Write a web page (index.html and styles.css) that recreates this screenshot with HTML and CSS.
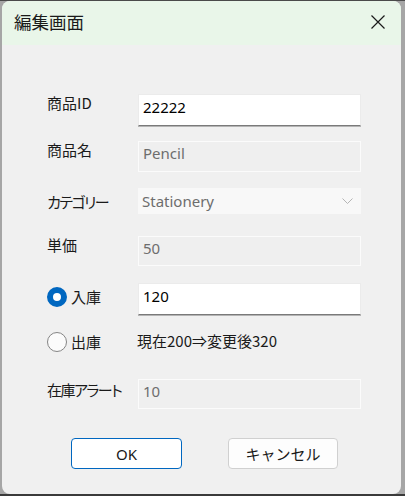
FILE: index.html
```html
<!DOCTYPE html>
<html lang="ja">
<head>
<meta charset="utf-8">
<title>編集画面</title>
<link rel="stylesheet" href="styles.css">
</head>
<body>
<div class="screen">
  <div class="topline"></div>
  <div class="window">
    <div class="titlebar">
      <span class="title">編集画面</span>
      <span class="close">
        <svg width="14" height="14" viewBox="0 0 14 14"><path d="M0.5 0.5 L13.5 13.5 M13.5 0.5 L0.5 13.5" stroke="#1a1a1a" stroke-width="1.2" fill="none"/></svg>
      </span>
    </div>
    <div class="content">
      <div class="row r1">
        <div class="label">商品ID</div>
        <div class="field edit h32">22222</div>
      </div>
      <div class="row r2">
        <div class="label">商品名</div>
        <div class="field disabled h31">Pencil</div>
      </div>
      <div class="row r3">
        <div class="label kana pad5">カテゴリー</div>
        <div class="field combo">
          <span>Stationery</span>
          <svg class="chev" width="11" height="6" viewBox="0 0 11 6"><path d="M0.5 0.5 L5.5 5.5 L10.5 0.5" stroke="#b5b5b5" stroke-width="1" fill="none"/></svg>
        </div>
      </div>
      <div class="row r4">
        <div class="label">単価</div>
        <div class="field disabled h30">50</div>
      </div>
      <div class="row r5">
        <div class="label radio-label pad4"><span class="radio on"></span>入庫</div>
        <div class="field edit h32">120</div>
      </div>
      <div class="row r6">
        <div class="label radio-label"><span class="radio"></span>出庫</div>
        <div class="info">現在200⇒変更後320</div>
      </div>
      <div class="row r7">
        <div class="label kana pad2">在庫アラート</div>
        <div class="field disabled h30">10</div>
      </div>
      <div class="buttons">
        <div class="btn primary">OK</div>
        <div class="btn">キャンセル</div>
      </div>
    </div>
  </div>
  <div class="taskbar"></div>
</div>
</body>
</html>
```
FILE: styles.css
```css
html, body {
  margin: 0;
  padding: 0;
}
body {
  background: #a6a6a6;
  width: 405px;
  height: 496px;
  overflow: hidden;
}
.screen {
  display: flex;
  flex-direction: column;
  height: 496px;
}
.topline {
  height: 1px;
  background: #4a4a4a;
}
.window {
  margin-left: 2px;
  width: 399px;
  height: 493px;
  background: #f0f0f0;
  border-radius: 8px;
  overflow: hidden;
  display: flex;
  flex-direction: column;
}
.taskbar {
  height: 2px;
  background: #3a3a3a;
}
.titlebar {
  height: 44px;
  flex: none;
  background: #e9f6e9;
  display: flex;
  align-items: center;
  justify-content: space-between;
  padding: 0 16px 2px 12px;
  box-sizing: border-box;
}
.title {
  font-family: "Noto Sans CJK JP", sans-serif;
  font-size: 17.5px;
  line-height: 22px;
  color: #1a1a1a;
}
.close {
  display: flex;
  width: 14px;
  height: 14px;
}
.content {
  padding: 49px 0 0 45px;
  font-family: "Noto Sans CJK JP", sans-serif;
}
.row {
  display: flex;
  align-items: flex-start;
}
.r1 { margin-bottom: 15px; }
.r2 { margin-bottom: 16px; }
.r3 { margin-bottom: 22px; }
.r4 { margin-bottom: 17px; }
.r5 { margin-bottom: 17px; }
.r6 { margin-bottom: 27px; height: 20px; align-items: center; }
.label {
  width: 91px;
  flex: none;
  font-size: 15px;
  line-height: 18px;
  color: #1a1a1a;
  font-feature-settings: "palt";
  white-space: nowrap;
}
.kana { letter-spacing: -1.5px; }
.pad2 { padding-top: 2px; }
.pad4 { padding-top: 4px; }
.pad5 { padding-top: 5px; }
.radio-label {
  display: flex;
  align-items: center;
  height: 20px;
  gap: 4px;
}
.radio {
  width: 20px;
  height: 20px;
  box-sizing: border-box;
  border-radius: 50%;
  border: 1px solid #858585;
  background: #fbfbfb;
  flex: none;
}
.radio.on {
  border: 6px solid #0067c0;
  background: #ffffff;
}
.field {
  width: 223px;
  box-sizing: border-box;
  font-family: "Noto Sans", "Noto Sans CJK JP", sans-serif;
  font-size: 15px;
  line-height: 22px;
  padding: 0 0 0 4px;
}
.h32 { height: 32px; }
.h31 { height: 31px; }
.h30 { height: 30px; }
.edit {
  background: #ffffff;
  color: #000;
  border: 1px solid #ebebeb;
  border-bottom: 1px solid #7a7a7a;
  box-shadow: 0 1px 0 #b4b4b4;
  padding-top: 1px;
}
.disabled {
  background: #efefef;
  color: #6d6d6d;
  border: 1px solid #fbfbfb;
  padding-top: 0;
}
.combo {
  height: 26px;
  background: #f8f8f8;
  color: #6d6d6d;
  display: flex;
  align-items: center;
  justify-content: space-between;
  padding: 0 8px 0 4px;
  line-height: 26px;
}
.chev { flex: none; }
.info {
  font-size: 15px;
  line-height: 20px;
  color: #1a1a1a;
  margin-left: -1px;
  margin-top: -3px;
}
.buttons {
  display: flex;
  gap: 46px;
  margin-top: 29px;
  padding-left: 24px;
}
.btn {
  width: 111px;
  height: 31px;
  box-sizing: border-box;
  border: 1px solid #d0d0d0;
  border-radius: 4px;
  background: #fdfdfd;
  display: flex;
  align-items: center;
  justify-content: center;
  font-family: "Noto Sans", "Noto Sans CJK JP", sans-serif;
  font-size: 15px;
  color: #1a1a1a;
}
.btn.primary {
  border-color: #0067c0;
  background: #ffffff;
}
.btn + .btn {
  width: 110px;
}
```
